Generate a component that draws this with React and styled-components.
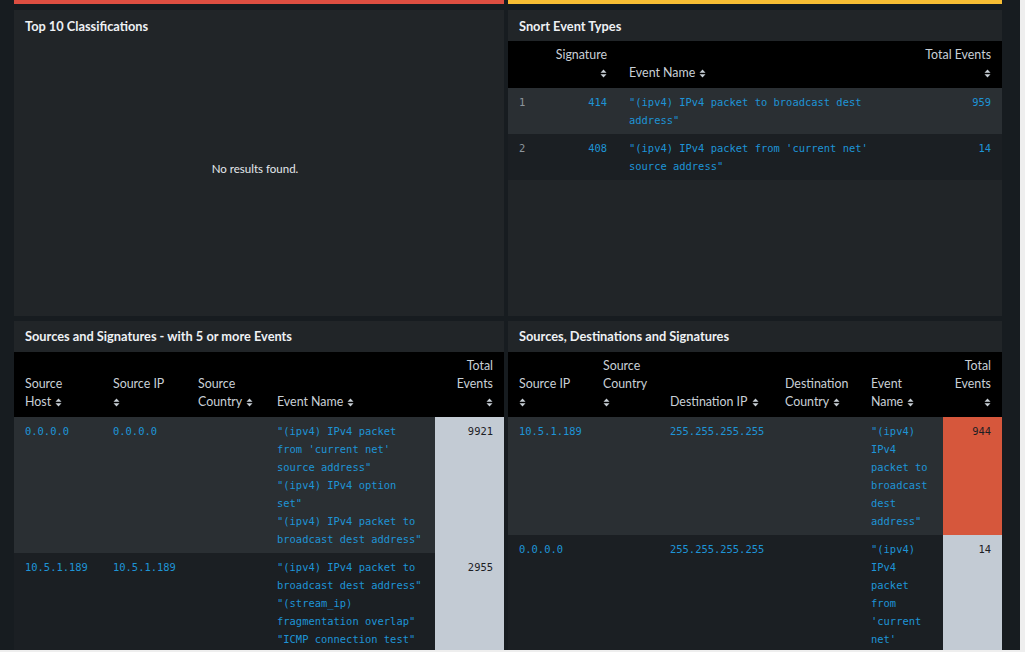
import React from "react";
import styled, { createGlobalStyle } from "styled-components";

const GlobalStyle = createGlobalStyle`
  html, body {
    margin: 0;
    padding: 0;
    background: #eeeeee;
  }
  body {
    font-family: Lato, "Open Sans", "Liberation Sans", sans-serif;
  }
`;

// dark dashboard canvas, clipped like the screenshot
const Dashboard = styled.div`
  width: 1020px;
  height: 650px;
  overflow: hidden;
  background: #171c20;
  box-sizing: border-box;
  padding-left: 14px;
`;

const Row = styled.div`
  display: grid;
  grid-template-columns: 490px 494px;
  column-gap: 4px;
  margin-bottom: ${(p) => p.$gap || 5}px;
`;

const Strip = styled.div`
  height: 4px;
  background: ${(p) => p.$color};
`;

const Panel = styled.div`
  background: #212528;
  height: ${(p) => (p.$height ? `${p.$height}px` : "auto")};
  display: flex;
  flex-direction: column;
`;

const PanelTitle = styled.div`
  font-size: 12.8px;
  font-weight: 700;
  line-height: 16px;
  color: #eef1f4;
  padding: ${(p) => p.$pad || "8px 11px 7px"};
  white-space: nowrap;
`;

const Empty = styled.div`
  flex: 1;
  display: flex;
  align-items: center;
  justify-content: center;
  padding: 0 8px 20px 0;
  font-size: 11.5px;
  color: #e4e8ec;
`;

const Table = styled.table`
  width: 100%;
  border-collapse: collapse;
  table-layout: fixed;
`;

const HeadRow = styled.tr`
  background: #000;
`;

const Th = styled.th`
  font-weight: 400;
  font-size: 12.4px;
  line-height: 18px;
  color: #c9d0d7;
  text-align: ${(p) => p.$align || "left"};
  vertical-align: bottom;
  padding: 5px 11px 6px;
  white-space: nowrap;
`;

const HeadLine = styled.div`
  height: 18px;
`;

const BodyRow = styled.tr`
  background: ${(p) => (p.$odd ? "#2a2f33" : "#1b1f23")};
`;

const Td = styled.td`
  font-family: "DejaVu Sans Mono", "Liberation Mono", monospace;
  font-size: 10.45px;
  line-height: 18px;
  vertical-align: top;
  padding: 5px 11px;
  text-align: ${(p) => p.$align || "left"};
  white-space: ${(p) => (p.$wrap ? "normal" : "nowrap")};
  color: ${(p) => (p.$kind === "idx" ? "#8d959c" : p.$heat ? "#1c2024" : "#1e94d6")};
  background: ${(p) => p.$heat || "transparent"};
  overflow-wrap: break-word;
`;

const SortSvg = styled.svg`
  display: inline-block;
  vertical-align: -1px;
  margin-left: ${(p) => (p.$alone ? 0 : 4)}px;
`;

const SortIcon = ({ alone }) => (
  <SortSvg width="7" height="9" viewBox="0 0 7 9" $alone={alone}>
    <path d="M0.5 3.8 L3.5 0.6 L6.5 3.8 Z" fill="#c9d0d7" />
    <path d="M0.5 5.2 L3.5 8.4 L6.5 5.2 Z" fill="#c9d0d7" />
  </SortSvg>
);

const HeaderCell = ({ col }) => (
  <Th $align={col.align}>
    {col.lines.map((line, i) => {
      const last = i === col.lines.length - 1;
      return (
        <HeadLine key={i}>
          {line}
          {last && col.sort && <SortIcon alone={line === ""} />}
        </HeadLine>
      );
    })}
  </Th>
);

const heatColor = (v) => (v === "hot" ? "#d6573c" : v === "cool" ? "#c3cbd4" : null);

const DataTable = ({ cols, rows }) => (
  <Table>
    <colgroup>
      {cols.map((c) => (
        <col key={c.key} style={{ width: c.width }} />
      ))}
    </colgroup>
    <thead>
      <HeadRow>
        {cols.map((c) => (
          <HeaderCell key={c.key} col={c} />
        ))}
      </HeadRow>
    </thead>
    <tbody>
      {rows.map((r, ri) => (
        <BodyRow key={ri} $odd={ri % 2 === 0}>
          {cols.map((c) => {
            const v = r[c.key];
            return (
              <Td
                key={c.key}
                $align={c.align}
                $kind={c.kind}
                $wrap={c.wrap}
                $heat={c.heat ? heatColor(r.heat) : null}
              >
                {Array.isArray(v) ? v.map((s, i) => <div key={i}>{s}</div>) : v}
              </Td>
            );
          })}
        </BodyRow>
      ))}
    </tbody>
  </Table>
);

const snortCols = [
  { key: "n", width: 34, lines: [""], kind: "idx" },
  { key: "sig", width: 76, align: "right", lines: ["Signature", ""], sort: true },
  { key: "name", width: 282, lines: ["Event Name"], sort: true, wrap: true },
  { key: "total", width: 102, align: "right", lines: ["Total Events", ""], sort: true },
];

const snortRows = [
  { n: "1", sig: "414", name: "\"(ipv4) IPv4 packet to broadcast dest address\"", total: "959" },
  { n: "2", sig: "408", name: "\"(ipv4) IPv4 packet from 'current net' source address\"", total: "14" },
];

const srcCols = [
  { key: "host", width: 88, lines: ["Source", "Host"], sort: true },
  { key: "ip", width: 85, lines: ["Source IP", ""], sort: true },
  { key: "country", width: 79, lines: ["Source", "Country"], sort: true },
  { key: "name", width: 169, lines: ["Event Name"], sort: true, wrap: true },
  { key: "total", width: 69, align: "right", lines: ["Total", "Events", ""], sort: true, heat: true },
];

const srcRows = [
  {
    host: "0.0.0.0",
    ip: "0.0.0.0",
    country: "",
    name: [
      "\"(ipv4) IPv4 packet from 'current net' source address\"",
      "\"(ipv4) IPv4 option set\"",
      "\"(ipv4) IPv4 packet to broadcast dest address\"",
    ],
    total: "9921",
    heat: "cool",
  },
  {
    host: "10.5.1.189",
    ip: "10.5.1.189",
    country: "",
    name: [
      "\"(ipv4) IPv4 packet to broadcast dest address\"",
      "\"(stream_ip) fragmentation overlap\"",
      "\"ICMP connection test\"",
    ],
    total: "2955",
    heat: "cool",
  },
];

const destCols = [
  { key: "ip", width: 84, lines: ["", "Source IP", ""], sort: true },
  { key: "country", width: 67, lines: ["Source", "Country", ""], sort: true },
  { key: "dip", width: 115, lines: ["Destination IP"], sort: true },
  { key: "dcountry", width: 86, lines: ["Destination", "Country"], sort: true },
  { key: "name", width: 83, lines: ["Event", "Name"], sort: true, wrap: true },
  { key: "total", width: 59, align: "right", lines: ["Total", "Events", ""], sort: true, heat: true },
];

const destRows = [
  {
    ip: "10.5.1.189",
    country: "",
    dip: "255.255.255.255",
    dcountry: "",
    name: ["\"(ipv4) IPv4 packet to broadcast dest address\""],
    total: "944",
    heat: "hot",
  },
  {
    ip: "0.0.0.0",
    country: "",
    dip: "255.255.255.255",
    dcountry: "",
    name: ["\"(ipv4) IPv4 packet from 'current net' source address\""],
    total: "14",
    heat: "cool",
  },
];

export default function App() {
  return (
    <>
      <GlobalStyle />
      <Dashboard>
        <Row $gap={6}>
          <Strip $color="#dc4e41" />
          <Strip $color="#f8be34" />
        </Row>
        <Row $gap={5}>
          <Panel $height={306}>
            <PanelTitle>Top 10 Classifications</PanelTitle>
            <Empty>No results found.</Empty>
          </Panel>
          <Panel $height={306}>
            <PanelTitle>Snort Event Types</PanelTitle>
            <DataTable cols={snortCols} rows={snortRows} />
          </Panel>
        </Row>
        <Row>
          <Panel>
            <PanelTitle $pad="7px 11px 8px">Sources and Signatures - with 5 or more Events</PanelTitle>
            <DataTable cols={srcCols} rows={srcRows} />
          </Panel>
          <Panel>
            <PanelTitle $pad="7px 11px 8px">Sources, Destinations and Signatures</PanelTitle>
            <DataTable cols={destCols} rows={destRows} />
          </Panel>
        </Row>
      </Dashboard>
    </>
  );
}
